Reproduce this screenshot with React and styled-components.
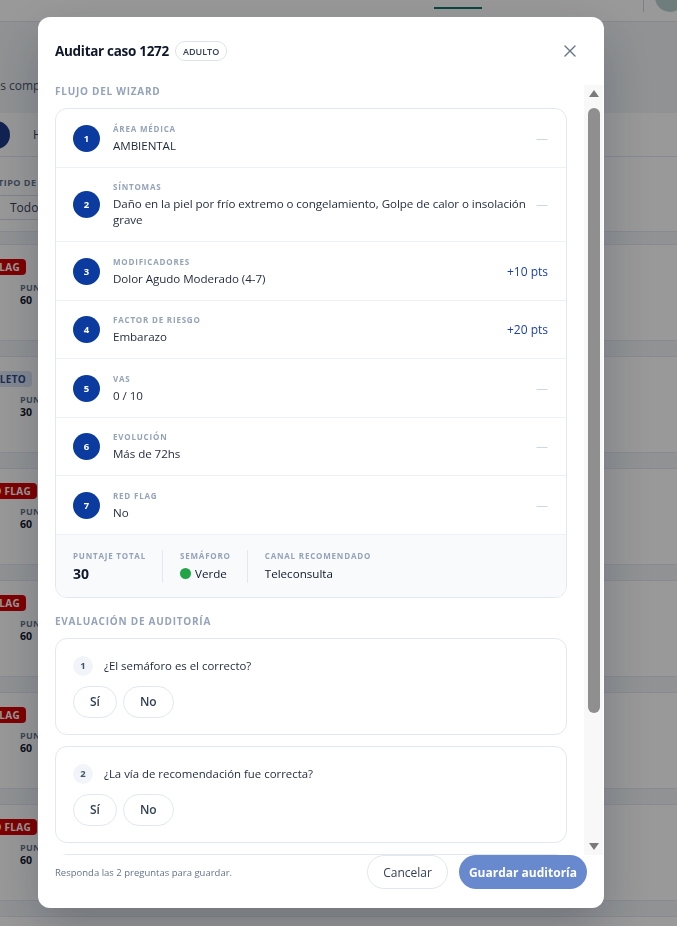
import React from 'react';
import styled, { createGlobalStyle } from 'styled-components';

const GlobalStyle = createGlobalStyle`
  html, body { margin: 0; padding: 0; }
  * { box-sizing: border-box; }
  body {
    font-family: "Open Sans", "Noto Sans", sans-serif;
    background: #f3f5f8;
    color: #1e293b;
    overflow: hidden;
  }
`;

/* ---------- background page (behind overlay) ---------- */
const Page = styled.div`
  width: 100%;
  height: 926px;
  overflow: hidden;
  background: #f1f4f7;
`;
const TopNav = styled.header`
  height: 22px;
  background: #fff;
  border-bottom: 1px solid #dfe4ea;
  display: flex;
  align-items: flex-start;
  overflow: hidden;
`;
const NavTab = styled.div`
  margin-left: 434px;
  width: 48px;
  height: 9px;
  border-bottom: 2px solid #0f766e;
`;
const NavRight = styled.div`
  margin-left: auto;
  display: flex;
  align-items: flex-start;
  gap: 11px;
`;
const NavDivider = styled.span`
  width: 1px;
  height: 12px;
  background: #cbd5e1;
`;
const Avatar = styled.span`
  width: 30px;
  height: 30px;
  margin-top: -18px;
  margin-right: -8px;
  border-radius: 50%;
  background: #b9d3cf;
`;
const PageHead = styled.div`
  height: 91px;
  display: flex;
  align-items: flex-end;
  padding-bottom: 19px;
`;
const PageSub = styled.p`
  margin: 0 0 0 -27px;
  font-size: 12px;
  color: #475569;
  white-space: nowrap;
`;
const TabsRow = styled.div`
  height: 44px;
  background: #fff;
  border-bottom: 1px solid #e2e8f0;
  display: flex;
  align-items: center;
  gap: 23px;
`;
const TabPill = styled.span`
  margin-left: -70px;
  width: 80px;
  height: 28px;
  border-radius: 14px;
  background: #1e3a8a;
`;
const TabText = styled.span`
  font-size: 12px;
  color: #334155;
  white-space: nowrap;
`;
const Filters = styled.div`
  height: 75px;
  background: #fff;
  padding-top: 19px;
  border-bottom: 1px solid #e2e8f0;
`;
const FilterLabel = styled.div`
  margin-left: -2px;
  font-size: 9px;
  font-weight: 700;
  letter-spacing: 0.5px;
  color: #64748b;
  white-space: nowrap;
`;
const FilterSelect = styled.div`
  margin: 6px 0 0 -4px;
  width: 160px;
  height: 25px;
  border: 1px solid #d7dde5;
  border-radius: 6px;
  padding-left: 13px;
  font-size: 12px;
  line-height: 23px;
  color: #334155;
  background: #fff;
`;
const BgList = styled.div`
  padding-top: 12px;
  display: flex;
  flex-direction: column;
  gap: 15px;
`;
const BgCard = styled.div`
  height: 97px;
  background: #fff;
  border-top: 1px solid #e2e8f0;
  border-bottom: 1px solid #e2e8f0;
  padding-top: 14px;
`;
const BadgeSlot = styled.div`
  height: 16px;
  display: flex;
  justify-content: flex-end;
`;
const BgBadge = styled.span`
  flex: none;
  height: 16px;
  padding: 0 6px;
  border-radius: 4px;
  font-size: 10px;
  font-weight: 700;
  line-height: 16px;
  letter-spacing: 0.3px;
  white-space: nowrap;
  background: ${p => (p.$tone === 'red' ? '#d60000' : '#dbe4f5')};
  color: ${p => (p.$tone === 'red' ? '#fff' : '#2b4a8a')};
`;
const BgScore = styled.div`
  margin: 7px 0 0 20px;
  display: flex;
  flex-direction: column;
`;
const BgScoreLabel = styled.span`
  font-size: 9px;
  font-weight: 700;
  color: #64748b;
  line-height: 11px;
  letter-spacing: 0.3px;
`;
const BgScoreValue = styled.span`
  font-size: 10.5px;
  font-weight: 700;
  color: #0f172a;
  line-height: 15px;
`;

/* ---------- modal ---------- */
const Overlay = styled.div`
  position: fixed;
  inset: 0;
  background: rgba(0, 0, 0, 0.4);
  padding: 17px 0 0 38px;
`;
const Modal = styled.div`
  width: 566px;
  height: 891px;
  background: #fff;
  border-radius: 12px;
  box-shadow: 0 20px 50px rgba(15, 23, 42, 0.25);
  display: flex;
  flex-direction: column;
  overflow: hidden;
`;
const ModalHeader = styled.div`
  display: flex;
  align-items: center;
  padding: 24px 26px 24px 17px;
`;
const Title = styled.h2`
  margin: 0;
  font-size: 13.5px;
  font-weight: 700;
  letter-spacing: -0.3px;
  line-height: 20px;
  color: #0f172a;
`;
const AgeBadge = styled.span`
  margin-left: 6px;
  height: 20px;
  padding: 0 7px;
  border: 1px solid #dde3ea;
  border-radius: 999px;
  display: inline-flex;
  align-items: center;
  font-size: 9px;
  font-weight: 600;
  color: #334155;
`;
const CloseButton = styled.button`
  margin-left: auto;
  width: 16px;
  height: 16px;
  padding: 0;
  border: 0;
  background: none;
  color: #64748b;
  display: flex;
  align-items: center;
  justify-content: center;
`;
const BodyRow = styled.div`
  flex: 1;
  min-height: 0;
  display: flex;
  padding-right: 1px;
`;
const Body = styled.div`
  flex: 1;
  min-width: 0;
  overflow: hidden;
  padding: 0 17px 22px 17px;
`;
const ScrollRail = styled.div`
  flex: none;
  width: 19px;
  background: #f8f8f8;
  display: flex;
  flex-direction: column;
  align-items: center;
`;
const RailButton = styled.div`
  height: 17px;
  display: flex;
  align-items: center;
  justify-content: center;
  color: #7a7a7a;
`;
const RailThumb = styled.div`
  width: 12px;
  margin-top: 6px;
  border-radius: 6px;
  background: #8f8f8f;
`;
const RailSpacer = styled.div`
  flex: 1;
`;
const SectionLabel = styled.div`
  margin: ${p => (p.$spaced ? '17px' : '0')} 0 10px;
  font-size: 10px;
  font-weight: 700;
  letter-spacing: 0.75px;
  line-height: 13px;
  color: #94a3b8;
`;
const FlowCard = styled.div`
  border: 1px solid #e2e8f0;
  border-radius: 12px;
  overflow: hidden;
`;
const StepRow = styled.div`
  display: flex;
  align-items: center;
  padding: 13.5px 18px 13px 17px;
  border-bottom: 1px solid #edf1f5;
`;
const StepCircle = styled.span`
  flex: none;
  width: 27px;
  height: 27px;
  margin-right: 13px;
  border-radius: 50%;
  background: #0b3b9e;
  color: #fff;
  font-size: 9.5px;
  font-weight: 700;
  display: flex;
  align-items: center;
  justify-content: center;
`;
const StepText = styled.div`
  flex: 1;
  min-width: 0;
  display: flex;
  flex-direction: column;
  gap: 4px;
`;
const MiniLabel = styled.span`
  font-size: 8px;
  font-weight: 700;
  letter-spacing: 0.8px;
  line-height: 11px;
  color: #94a3b8;
  text-transform: uppercase;
`;
const StepValue = styled.span`
  font-size: 11.6px;
  letter-spacing: -0.06px;
  line-height: 16px;
  color: #1e293b;
`;
const StepAside = styled.span`
  flex: none;
  margin-left: 4px;
  font-size: 12px;
  font-weight: ${p => (p.$points ? 500 : 400)};
  color: ${p => (p.$points ? '#1e40af' : '#cbd5e1')};
`;
const Summary = styled.div`
  display: flex;
  background: #f8fafc;
  padding: 15px 17px 14px;
`;
const SummaryItem = styled.div`
  display: flex;
  flex-direction: column;
  gap: 4px;
  padding: 0 16px 0 17px;
  border-left: 1px solid #e2e8f0;
  &:first-child {
    padding-left: 0;
    border-left: 0;
  }
`;
const SummaryValue = styled.span`
  display: flex;
  align-items: center;
  gap: 4px;
  font-size: ${p => (p.$big ? '14px' : '11.6px')};
  font-weight: ${p => (p.$big ? 700 : 400)};
  line-height: 18px;
  color: #0f172a;
`;
const Dot = styled.span`
  width: 11px;
  height: 11px;
  border-radius: 50%;
  background: #22a447;
`;
const QuestionList = styled.div`
  display: flex;
  flex-direction: column;
  gap: 11px;
`;
const QuestionCard = styled.div`
  border: 1px solid #e2e8f0;
  border-radius: 12px;
  padding: 17px 17px 16px;
  display: flex;
  flex-direction: column;
  gap: 10px;
`;
const QuestionHead = styled.div`
  display: flex;
  align-items: center;
  gap: 11px;
`;
const QNumber = styled.span`
  flex: none;
  width: 20px;
  height: 20px;
  border-radius: 50%;
  background: #f1f5f9;
  color: #475569;
  font-size: 9.5px;
  font-weight: 700;
  display: flex;
  align-items: center;
  justify-content: center;
`;
const QText = styled.span`
  font-size: 11.4px;
  font-weight: 500;
  color: #1e293b;
`;
const Choices = styled.div`
  display: flex;
  gap: 6px;
`;
const Choice = styled.button`
  height: 32px;
  padding: 0 16px;
  border: 1px solid #e2e8f0;
  border-radius: 999px;
  background: #fff;
  font-family: inherit;
  font-size: 12px;
  font-weight: 600;
  color: #334155;
`;
const NotesArea = styled.div`
  height: 90px;
  border: 1px solid #e2e8f0;
  border-radius: 10px;
  padding: 10px 12px;
  font-size: 12px;
  color: #94a3b8;
`;
const Footer = styled.div`
  display: flex;
  align-items: center;
  padding: 0 17px 19px 17px;
`;
const Hint = styled.span`
  font-size: 9.5px;
  color: #64748b;
`;
const FooterButtons = styled.div`
  margin-left: auto;
  display: flex;
  gap: 11px;
`;
const GhostButton = styled.button`
  height: 34px;
  padding: 0 15px;
  border: 1px solid #e2e8f0;
  border-radius: 999px;
  background: #fff;
  font-family: inherit;
  font-size: 12px;
  font-weight: 500;
  color: #334155;
`;
const PrimaryButton = styled.button`
  height: 34px;
  padding: 0 10px;
  border: 0;
  border-radius: 999px;
  background: #6989cf;
  font-family: inherit;
  font-size: 12px;
  font-weight: 700;
  color: #fff;
`;

const steps = [
  { label: 'Área médica', value: 'AMBIENTAL' },
  { label: 'Síntomas', value: 'Daño en la piel por frío extremo o congelamiento, Golpe de calor o insolación grave' },
  { label: 'Modificadores', value: 'Dolor Agudo Moderado (4-7)', pts: '+10 pts' },
  { label: 'Factor de riesgo', value: 'Embarazo', pts: '+20 pts' },
  { label: 'VAS', value: '0 / 10' },
  { label: 'Evolución', value: 'Más de 72hs' },
  { label: 'Red flag', value: 'No' },
];

const questions = ['¿El semáforo es el correcto?', '¿La vía de recomendación fue correcta?'];

const bgRows = [
  { badge: 'RED FLAG', tone: 'red', end: 26, score: 60 },
  { badge: 'INCOMPLETO', tone: 'blue', end: 32, score: 30 },
  { badge: 'RED FLAG', tone: 'red', end: 37, score: 60 },
  { badge: 'RED FLAG', tone: 'red', end: 26, score: 60 },
  { badge: 'RED FLAG', tone: 'red', end: 26, score: 60 },
  { badge: 'RED FLAG', tone: 'red', end: 37, score: 60 },
  { badge: 'RED FLAG', tone: 'red', end: 30, score: 60 },
];

function CloseIcon() {
  return (
    <svg width="12" height="12" viewBox="0 0 12 12" fill="none">
      <path d="M1 1L11 11M11 1L1 11" stroke="currentColor" strokeWidth="1.4" strokeLinecap="round" />
    </svg>
  );
}

function RailArrow({ down }) {
  return (
    <svg width="10" height="7" viewBox="0 0 10 7">
      <path d={down ? 'M0 0H10L5 7Z' : 'M5 0L10 7H0Z'} fill="currentColor" />
    </svg>
  );
}

export default function App() {
  return (
    <>
      <GlobalStyle />
      <Page>
        <TopNav>
          <NavTab />
          <NavRight>
            <NavDivider />
            <Avatar />
          </NavRight>
        </TopNav>
        <PageHead>
          <PageSub>Casos completados y pendientes de auditoría</PageSub>
        </PageHead>
        <TabsRow>
          <TabPill />
          <TabText>Historial</TabText>
        </TabsRow>
        <Filters>
          <FilterLabel>TIPO DE CASO</FilterLabel>
          <FilterSelect>Todos</FilterSelect>
        </Filters>
        <BgList>
          {bgRows.map((r, i) => (
            <BgCard key={i}>
              <BadgeSlot style={{ width: r.end }}>
                <BgBadge $tone={r.tone}>{r.badge}</BgBadge>
              </BadgeSlot>
              <BgScore>
                <BgScoreLabel>PUNTAJE</BgScoreLabel>
                <BgScoreValue>{r.score}</BgScoreValue>
              </BgScore>
            </BgCard>
          ))}
        </BgList>
      </Page>

      <Overlay>
        <Modal>
          <ModalHeader>
            <Title>Auditar caso 1272</Title>
            <AgeBadge>ADULTO</AgeBadge>
            <CloseButton aria-label="Cerrar">
              <CloseIcon />
            </CloseButton>
          </ModalHeader>
          <BodyRow>
            <Body>
              <SectionLabel>FLUJO DEL WIZARD</SectionLabel>
              <FlowCard>
                {steps.map((s, i) => (
                  <StepRow key={s.label}>
                    <StepCircle>{i + 1}</StepCircle>
                    <StepText>
                      <MiniLabel>{s.label}</MiniLabel>
                      <StepValue>{s.value}</StepValue>
                    </StepText>
                    <StepAside $points={!!s.pts}>{s.pts || '—'}</StepAside>
                  </StepRow>
                ))}
                <Summary>
                  <SummaryItem>
                    <MiniLabel>Puntaje total</MiniLabel>
                    <SummaryValue $big>30</SummaryValue>
                  </SummaryItem>
                  <SummaryItem>
                    <MiniLabel>Semáforo</MiniLabel>
                    <SummaryValue>
                      <Dot />
                      Verde
                    </SummaryValue>
                  </SummaryItem>
                  <SummaryItem>
                    <MiniLabel>Canal recomendado</MiniLabel>
                    <SummaryValue>Teleconsulta</SummaryValue>
                  </SummaryItem>
                </Summary>
              </FlowCard>

              <SectionLabel $spaced>EVALUACIÓN DE AUDITORÍA</SectionLabel>
              <QuestionList>
                {questions.map((q, i) => (
                  <QuestionCard key={q}>
                    <QuestionHead>
                      <QNumber>{i + 1}</QNumber>
                      <QText>{q}</QText>
                    </QuestionHead>
                    <Choices>
                      <Choice>Sí</Choice>
                      <Choice>No</Choice>
                    </Choices>
                  </QuestionCard>
                ))}
                <QuestionCard>
                  <QuestionHead>
                    <QNumber>3</QNumber>
                    <QText>Observaciones (opcional)</QText>
                  </QuestionHead>
                  <NotesArea>Escriba un comentario…</NotesArea>
                </QuestionCard>
              </QuestionList>
            </Body>
            <ScrollRail aria-hidden="true">
              <RailButton>
                <RailArrow />
              </RailButton>
              <RailThumb style={{ height: 605 }} />
              <RailSpacer />
              <RailButton>
                <RailArrow down />
              </RailButton>
            </ScrollRail>
          </BodyRow>
          <Footer>
            <Hint>Responda las 2 preguntas para guardar.</Hint>
            <FooterButtons>
              <GhostButton>Cancelar</GhostButton>
              <PrimaryButton>Guardar auditoría</PrimaryButton>
            </FooterButtons>
          </Footer>
        </Modal>
      </Overlay>
    </>
  );
}
